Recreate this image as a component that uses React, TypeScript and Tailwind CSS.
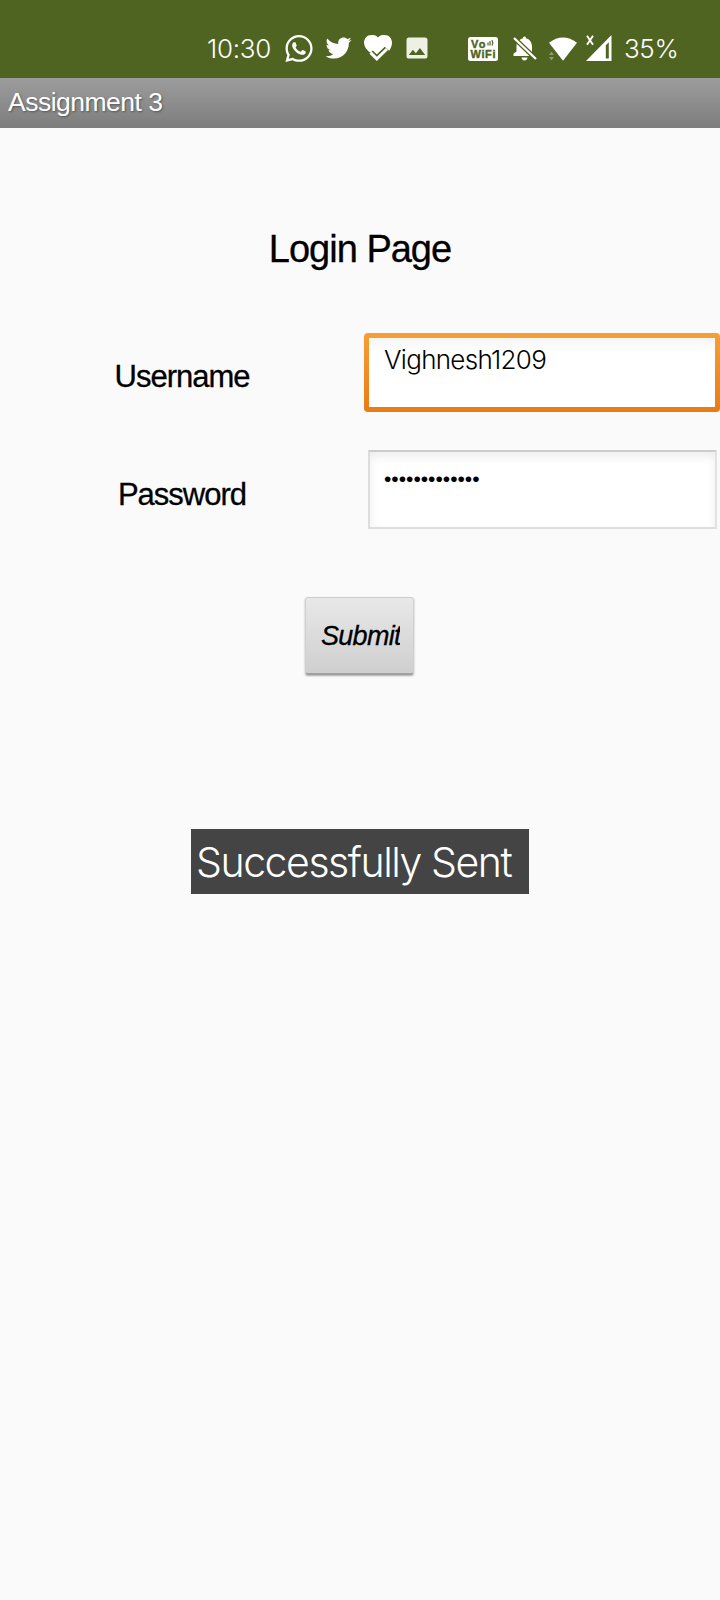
import { FaTwitter, FaWhatsapp } from "react-icons/fa";
import { MdImage } from "react-icons/md";

function HeartCheck() {
  return (
    <svg className="ml-[12px] h-[28px] w-[30px] shrink-0" viewBox="0 0 30 28">
      <path
        fill="#fff"
        d="M15 3.400C12.800 1.200 10.600 1 8.600 1 4 1 1 4.400 1 8.800c0 3.600 2.400 6.400 5 9l7.500 5L24 14.500l2 2.500C28 14.200 29 11.500 29 8.800 29 4.400 26 1 21.400 1 19.400 1 17.200 1.200 15 3.400z"
      />
      <path d="M7.500 18.700l6.300 6.100 10.200-9.800" fill="none" stroke="#506421" strokeWidth="6.400" />
      <path d="M7.500 18.700l6.300 6.100 10.200-9.800" fill="none" stroke="#fff" strokeWidth="3" />
    </svg>
  );
}

function VoWifi() {
  return (
    <svg className="h-[24px] w-[30px] shrink-0" viewBox="0 0 30 24">
      <rect width="30" height="24" rx="2.500" fill="#fff" />
      <g fill="#506421" fontFamily="Liberation Sans, sans-serif" fontWeight="700" fontSize="11" stroke="#506421" strokeWidth=".4">
        <text x="3" y="11" textLength="14.500" lengthAdjust="spacing">Vo</text>
        <text x="2.500" y="21" textLength="25" lengthAdjust="spacing">WiFi</text>
      </g>
      <path d="M20 5.500v3M22 4v4.500M24 3q1.500 2.500 0 5.500" stroke="#506421" strokeWidth="1.200" fill="none" />
    </svg>
  );
}

function BellOff() {
  return (
    <svg className="ml-[15px] h-[25px] w-[24px] shrink-0" viewBox="0 0 24 25">
      <path
        fill="#fff"
        d="M6 4.500Q8 2.500 10 2.200V1.500Q11.500-.5 13 1.500v.7Q18.500 3.800 19 10v6.500L6 4.500zM3.800 7L17.500 20H.5v-2.200l3-2.300V10q0-1.500.3-3zM8.500 21.500h6Q14 24.500 11.500 24.500T8.500 21.500z"
      />
      <path d="M1 2l22 21" stroke="#506421" strokeWidth="4.800" />
      <path d="M1 2l22 21" stroke="#fff" strokeWidth="2.300" />
    </svg>
  );
}

function Wifi() {
  return (
    <svg className="ml-[12px] h-[24px] w-[28px] shrink-0" viewBox="0 0 28 24">
      <path d="M0 5.800Q14-5 28 5.800L14 23.800z" fill="#fff" />
      <path d="M0 18l2.500-3.500L5 18zM0 20h5l-2.500 3.500z" fill="#fff" opacity=".35" />
    </svg>
  );
}

function Signal() {
  return (
    <svg className="ml-[9px] h-[27px] w-[26px] shrink-0" viewBox="0 0 26 27">
      <path fillRule="evenodd" d="M0 26L25.500 0v26zM19.800 10.200v13.300h3V7.200z" fill="#fff" />
      <path d="M1 .8l6 9M7 .8l-6 9" stroke="#fff" strokeWidth="1.900" />
    </svg>
  );
}

function StatusBar() {
  return (
    <header className="flex h-[78px] items-center bg-[#506421] pt-[18px] pl-[207px] text-white">
      <span className="w-[65px] pt-px whitespace-nowrap font-['Inter',sans-serif] text-[26px] leading-[30px] font-light tracking-[-0.3px]">10:30</span>
      <FaWhatsapp className="ml-[12px] h-[31px] w-[30px] shrink-0" />
      <FaTwitter className="ml-[11px] h-[26px] w-[27px] shrink-0" />
      <div className="-ml-px flex items-center">
        <HeartCheck />
        <MdImage className="ml-[10px] h-[28px] w-[28px] shrink-0 text-[#eef0e6]" />
      </div>
      <div className="ml-[37px] flex items-center pt-px">
        <VoWifi />
        <BellOff />
        <Wifi />
        <Signal />
      </div>
      <span className="ml-[12px] pt-px whitespace-nowrap font-['Inter',sans-serif] text-[26px] leading-[30px] font-light tracking-[-0.4px]">35%</span>
    </header>
  );
}

export default function App() {
  return (
    <div className="flex h-[1600px] w-[720px] flex-col overflow-hidden bg-[#fafafa] font-['Liberation_Sans',sans-serif] text-black">
      <StatusBar />
      <div className="h-[50px] bg-linear-to-b from-[#9d9d9d] to-[#7d7d7d] pt-[9px] pl-[8px] text-[26.5px] leading-[30px] tracking-[-0.5px] whitespace-nowrap text-white [text-shadow:1px_1px_2px_#555]">
        Assignment 3
      </div>
      <h1 className="mt-[99px] text-center text-[38px] leading-[44px] tracking-[-1px] [-webkit-text-stroke:0.3px_black]">Login Page</h1>
      <form className="mt-[62px] flex flex-col">
        <div className="flex h-[79px]">
          <label className="w-[364px] pt-[26px] text-center text-[31px] leading-[36px] tracking-[-1px] [-webkit-text-stroke:0.3px_black]">Username</label>
          <div className="h-[79px] w-[356px] rounded-[4px] bg-linear-to-b from-[#f79f35] to-[#e87b12] p-[5px]">
            <div className="h-full bg-linear-to-b from-[#f5f5f5] to-white to-20% pt-[7px] pl-[15px] font-['Inter',sans-serif] text-[26px] leading-[30px] font-light tracking-[-0.7px]">
              Vighnesh1209
            </div>
          </div>
        </div>
        <div className="mt-[38px] flex h-[79px]">
          <label className="w-[364px] pt-[27px] text-center text-[31px] leading-[36px] tracking-[-1px] [-webkit-text-stroke:0.3px_black]">Password</label>
          <div className="ml-[4px] h-[79px] w-[349px] border-2 border-t-[#cccccc] border-r-[#e2e2e2] border-b-[#dddddd] border-l-[#dddddd] bg-white pt-[12px] pl-[14px] text-[21px] leading-[30px] shadow-[inset_0_5px_10px_#eeeeee]">
            •••••••••••••
          </div>
        </div>
        <button type="button" className="mt-[68px] ml-[305px] h-[78px] w-[109px] rounded-[3px] border border-[#cfcfcf] border-b-2 border-b-[#a0a0a0] bg-linear-to-b from-[#e8e8e8] to-[#cfcfcf] pr-[13px] pl-[15px] shadow-[0_1px_2px_#aaaaaa]">
          <span className="block overflow-hidden text-left text-[27px] leading-[30px] tracking-[-0.7px] whitespace-nowrap italic [-webkit-text-stroke:0.3px_black]">Submit</span>
        </button>
      </form>
      <div className="mt-[154px] ml-[191px] h-[65px] w-[338px] bg-[#444444] pt-[10px] pl-[5px] font-['Inter',sans-serif] text-[41px] leading-[46px] font-light tracking-[-1.45px] whitespace-nowrap text-white">
        Successfully Sent
      </div>
    </div>
  );
}
